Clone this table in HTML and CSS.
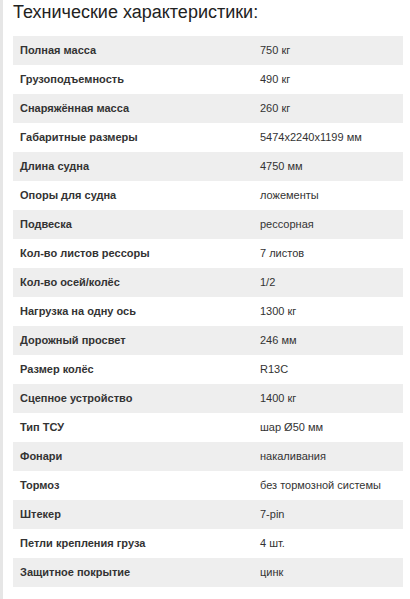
FILE: index.html
```html
<!DOCTYPE html>
<html lang="ru">
<head>
<meta charset="utf-8">
<link rel="stylesheet" href="styles.css">
</head>
<body>
<div class="page">
  <h2 class="title">Технические характеристики:</h2>
  <table class="specs">
    <tr><td class="k">Полная масса</td><td class="v">750 кг</td></tr>
    <tr><td class="k">Грузоподъемность</td><td class="v">490 кг</td></tr>
    <tr><td class="k">Снаряжённая масса</td><td class="v">260 кг</td></tr>
    <tr><td class="k">Габаритные размеры</td><td class="v">5474x2240x1199 мм</td></tr>
    <tr><td class="k">Длина судна</td><td class="v">4750 мм</td></tr>
    <tr><td class="k">Опоры для судна</td><td class="v">ложементы</td></tr>
    <tr><td class="k">Подвеска</td><td class="v">рессорная</td></tr>
    <tr><td class="k">Кол-во листов рессоры</td><td class="v">7 листов</td></tr>
    <tr><td class="k">Кол-во осей/колёс</td><td class="v">1/2</td></tr>
    <tr><td class="k">Нагрузка на одну ось</td><td class="v">1300 кг</td></tr>
    <tr><td class="k">Дорожный просвет</td><td class="v">246 мм</td></tr>
    <tr><td class="k">Размер колёс</td><td class="v">R13C</td></tr>
    <tr><td class="k">Сцепное устройство</td><td class="v">1400 кг</td></tr>
    <tr><td class="k">Тип ТСУ</td><td class="v">шар Ø50 мм</td></tr>
    <tr><td class="k">Фонари</td><td class="v">накаливания</td></tr>
    <tr><td class="k">Тормоз</td><td class="v">без тормозной системы</td></tr>
    <tr><td class="k">Штекер</td><td class="v">7-pin</td></tr>
    <tr><td class="k">Петли крепления груза</td><td class="v">4 шт.</td></tr>
    <tr><td class="k">Защитное покрытие</td><td class="v">цинк</td></tr>
  </table>
</div>
</body>
</html>
```

FILE: styles.css
```css
html, body {
  margin: 0;
  padding: 0;
  background: #fff;
}
body {
  font-family: "Liberation Sans", Arial, sans-serif;
  color: #333;
}
.page {
  border-left: 3px solid #e6e6e6;
  min-height: 599px;
  box-sizing: border-box;
  padding: 0 7px 0 10px;
}
.title {
  margin: 0;
  height: 36px;
  box-sizing: border-box;
  font-size: 18px;
  font-weight: normal;
  line-height: 24px;
  color: #222;
}
.specs {
  width: 390px;
  border-collapse: collapse;
  font-size: 11px;
}
.specs tr {
  height: 29px;
}
.specs tr:nth-child(odd) {
  background: #eeeeee;
}
.specs td {
  padding: 0 7px;
  vertical-align: middle;
  line-height: 13px;
}
.specs .k {
  width: 226px;
  font-weight: bold;
}
```
